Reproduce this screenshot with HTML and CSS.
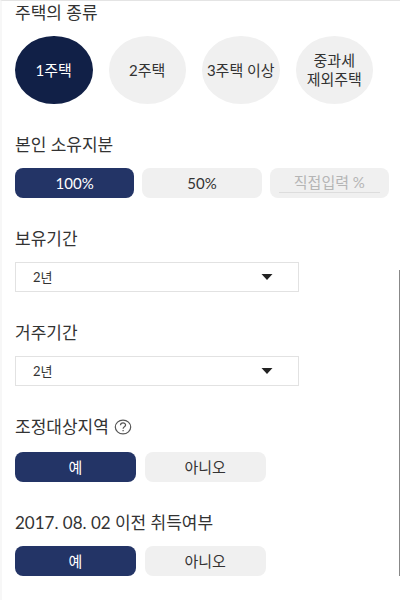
FILE: index.html
```
<!DOCTYPE html>
<html lang="ko">
<head>
  <meta charset="UTF-8" />
  <meta name="viewport" content="width=device-width, initial-scale=1.0"/>
  <title>양도소득세 계산</title>
  <link rel="stylesheet" href="styles.css">
</head>
<body>
  <form class="container" id="taxForm">
    <section>
      <h2>주택의 종류</h2>
      <div class="house-types">
        <button type="button" class="circle active">1주택</button>
        <button type="button" class="circle">2주택</button>
        <button type="button" class="circle">3주택 이상</button>
        <button type="button" class="circle">중과세<br>제외주택</button>
      </div>
    </section>

    <section>
      <h2>본인 소유지분</h2>
      <div class="shares">
        <button type="button" class="option active">100%</button>
        <button type="button" class="option">50%</button>
        <div class="option direct">
          <input type="text" name="share" placeholder="직접입력 %" aria-label="직접입력 %">
        </div>
      </div>
    </section>

    <section>
      <h2><label for="holding">보유기간</label></h2>
      <div class="select-box">
        <select id="holding" name="holding">
          <option>2년</option>
          <option>3년</option>
          <option>4년</option>
        </select>
        <svg class="arrow" viewBox="0 0 12 6" aria-hidden="true"><path d="M0.5 0H11.5L6 6Z"/></svg>
      </div>
    </section>

    <section>
      <h2><label for="living">거주기간</label></h2>
      <div class="select-box">
        <select id="living" name="living">
          <option>2년</option>
          <option>3년</option>
          <option>4년</option>
        </select>
        <svg class="arrow" viewBox="0 0 12 6" aria-hidden="true"><path d="M0.5 0H11.5L6 6Z"/></svg>
      </div>
    </section>

    <section class="area">
      <h2>조정대상지역
        <svg class="help" viewBox="0 0 18 16" aria-hidden="true">
          <ellipse cx="9" cy="8" rx="7.7" ry="6.9"/>
          <path d="M6.5 6.2C6.5 3.2 11.6 3.2 11.6 6C11.6 7.8 9.1 7.8 9.1 9.7M9.1 10.9V12.3"/>
        </svg>
      </h2>
      <div class="yes-no">
        <button type="button" class="option active">예</button>
        <button type="button" class="option">아니오</button>
      </div>
    </section>

    <section>
      <h2>2017. 08. 02 이전 취득여부</h2>
      <div class="yes-no">
        <button type="button" class="option active">예</button>
        <button type="button" class="option">아니오</button>
      </div>
    </section>
  </form>
  <div class="scrollbar"></div>

  <script>
    document.querySelectorAll('.house-types, .shares, .yes-no').forEach(function(group) {
      group.addEventListener('click', function(e) {
        const button = e.target.closest('button');
        if (!button) return;
        group.querySelectorAll('button').forEach(b => b.classList.remove('active'));
        button.classList.add('active');
      });
    });
  </script>
</body>
</html>
```
FILE: styles.css
```
body {
  font-family: Lato, "Noto Sans CJK KR", sans-serif;
  background: #fff;
  color: #333;
  margin: 0;
}
.container {
  box-sizing: border-box;
  min-height: 100vh;
  padding: 0 11px 0 13px;
  border-top: 1px solid #e4e4e4;
  border-left: 2px solid #f7f7f7;
}
section {
  margin-bottom: 29px;
}
section:last-child {
  margin-bottom: 0;
}
h2 {
  display: flex;
  align-items: center;
  gap: 5px;
  margin: 0 0 11px;
  font-size: 17px;
  font-weight: normal;
  line-height: 24px;
}
button, input, select {
  font-family: inherit;
  font-size: 15px;
  color: inherit;
  box-sizing: border-box;
}
button {
  padding: 0;
  border: none;
  cursor: pointer;
}
.house-types {
  display: grid;
  grid-template-columns: repeat(4, 1fr);
  gap: 16px;
  padding-right: 16px;
}
.circle {
  height: 68px;
  border-radius: 50%;
  background: #f0f0f0;
  line-height: 19px;
  white-space: nowrap;
}
.circle.active {
  background: #112047;
  color: #fff;
}
.shares {
  display: grid;
  grid-template-columns: repeat(3, 1fr);
  gap: 8px;
}
.option {
  height: 30px;
  border-radius: 8px;
  background: #f0f0f0;
  line-height: 20px;
}
.option.active {
  background: #233466;
  color: #fff;
}
.direct {
  padding: 4px 9px;
  box-sizing: border-box;
}
.direct input {
  display: block;
  width: 100%;
  height: 21px;
  padding: 0;
  border: none;
  border-bottom: 1px solid #ddd;
  background: none;
  text-align: center;
}
.direct input::placeholder {
  color: #b5b5b5;
}
.select-box {
  position: relative;
  width: 76%;
}
select {
  display: block;
  width: 100%;
  height: 30px;
  padding: 0 17px;
  border: 1px solid #e2e2e2;
  border-radius: 0;
  background: #fff;
  font-size: 13px;
  appearance: none;
}
.arrow {
  position: absolute;
  top: 12px;
  right: 26px;
  width: 12px;
  height: 6px;
  fill: #222;
  pointer-events: none;
}
.help {
  width: 18px;
  height: 16px;
  fill: none;
  stroke: #555;
  stroke-width: 1.2;
}
.yes-no {
  display: grid;
  grid-template-columns: 1fr 1fr;
  gap: 9px;
  width: 67%;
}
.area h2 {
  margin-bottom: 13px;
}
.scrollbar {
  position: fixed;
  top: 45%;
  right: 0;
  width: 1px;
  height: 51%;
  background: #888;
}
```
